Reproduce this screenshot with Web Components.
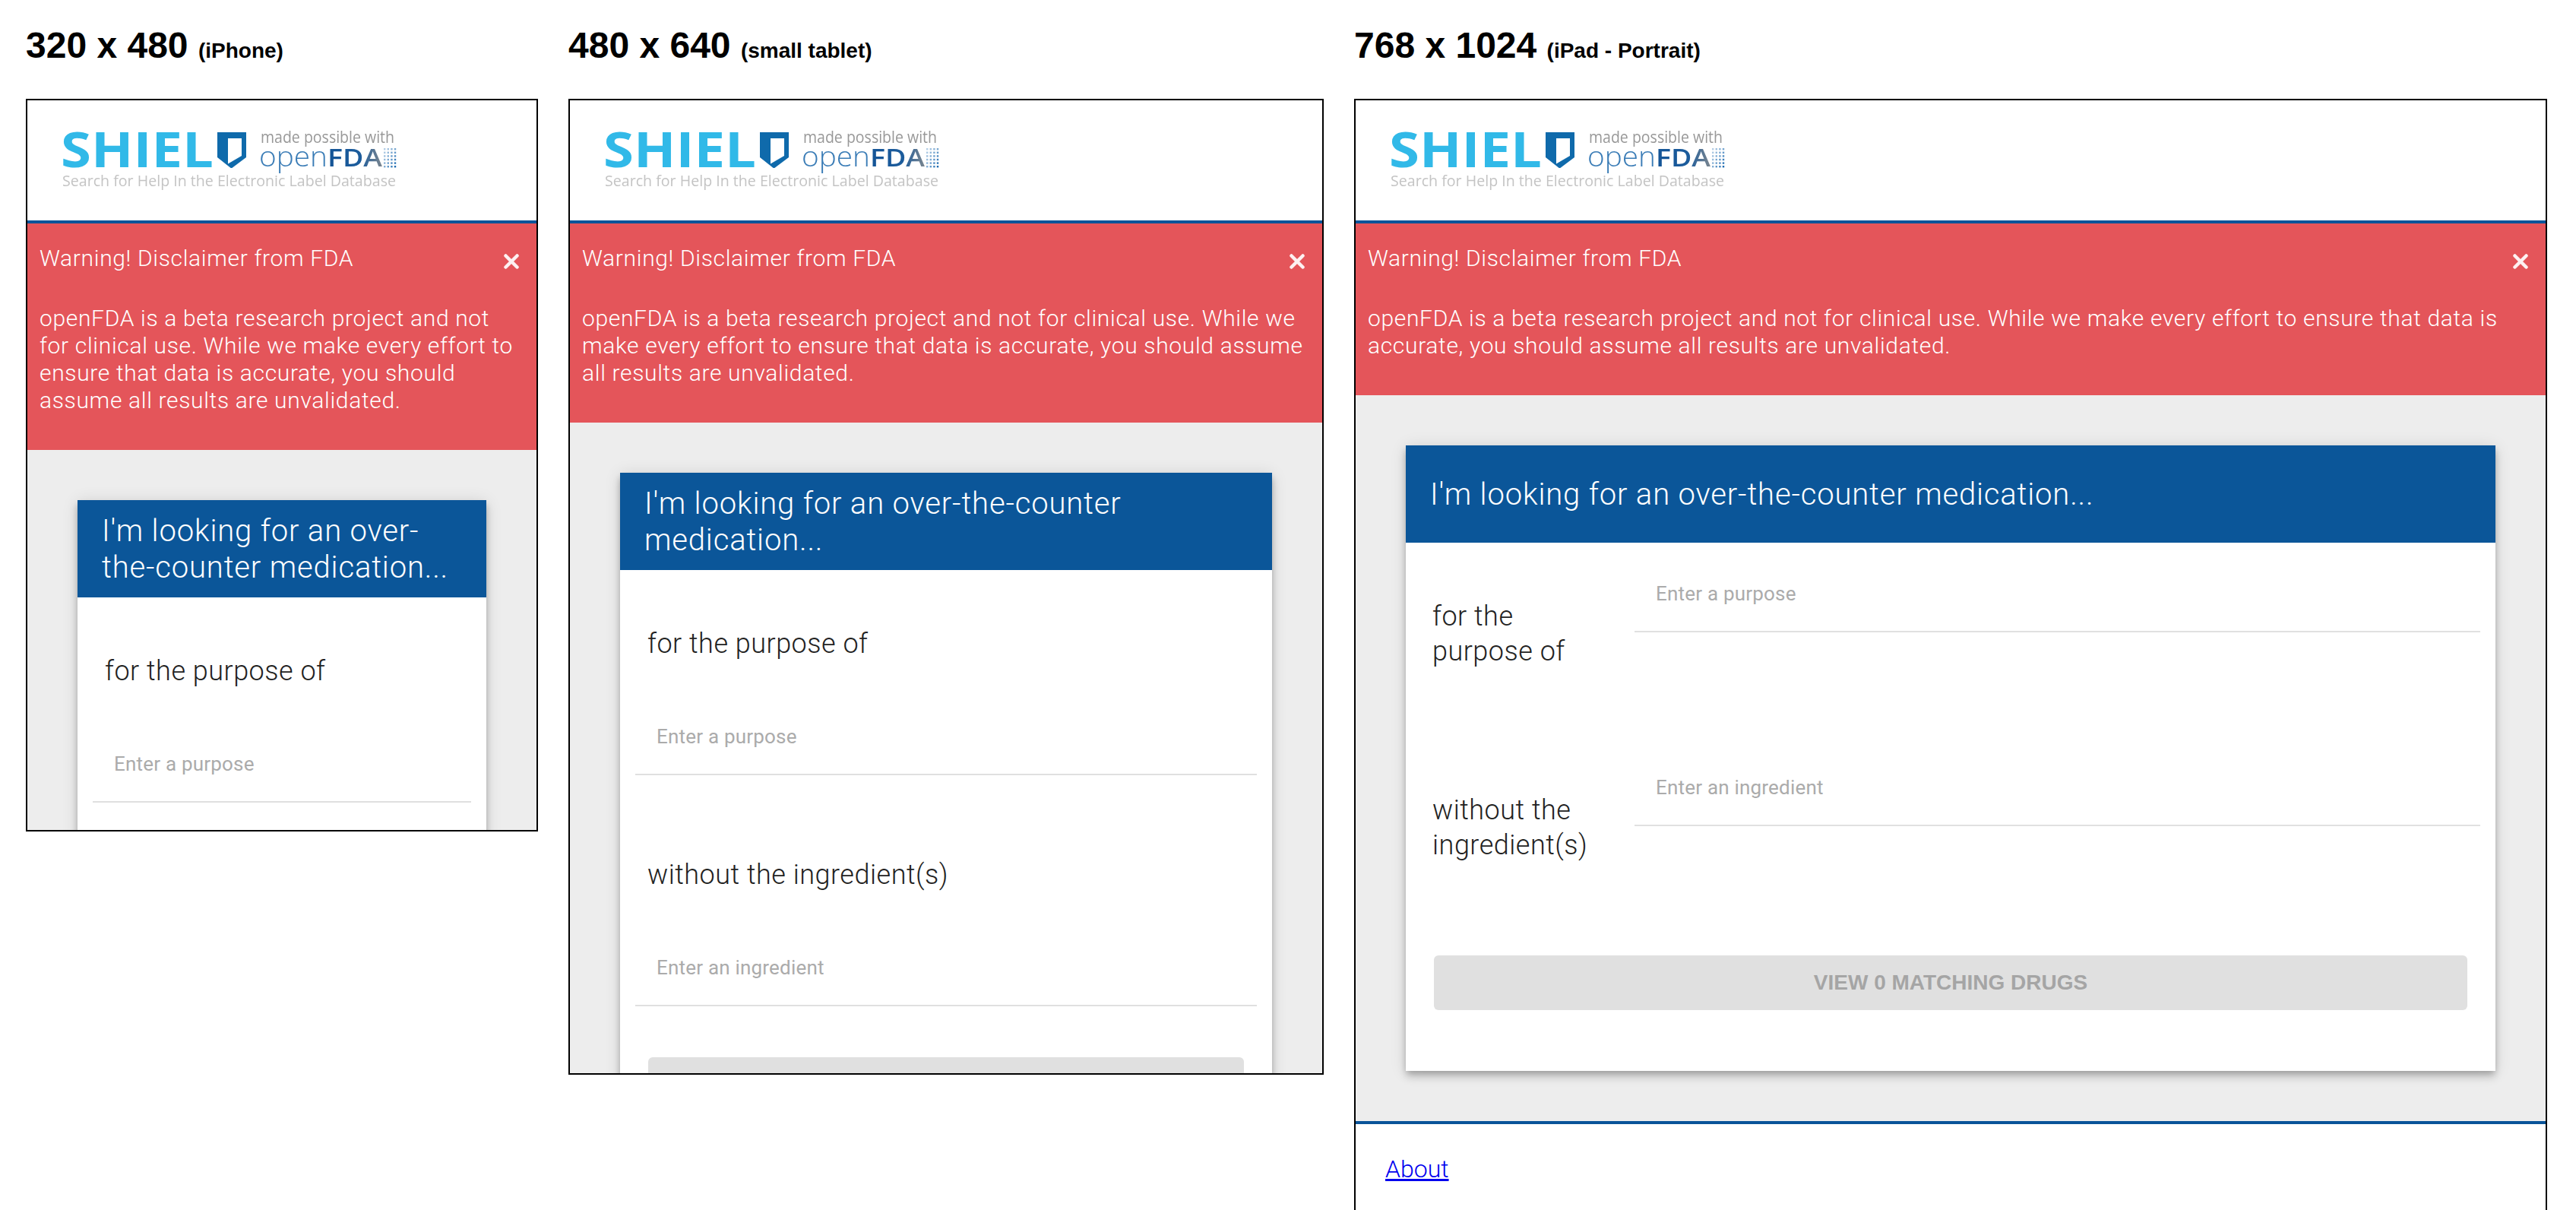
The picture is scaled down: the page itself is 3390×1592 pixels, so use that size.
<!DOCTYPE html>
<html lang="en">
<head>
<meta charset="utf-8">
<title>SHIELD responsive screens</title>
<style>
html,body{margin:0;padding:0;background:#fff;height:100%;overflow:hidden}
body{font-family:"Liberation Sans",Arial,sans-serif}
</style>
</head>
<body>
<app-gallery>
  <device-view width="674" height="964" title-main="320 x 480" title-sub="(iPhone)">
    <shield-header></shield-header>
    <fda-alert>openFDA is a beta research project and not<br>for clinical use. While we make every effort to<br>ensure that data is accurate, you should<br>assume all results are unvalidated.</fda-alert>
    <search-main gap="66">
      <search-card layout="stacked">
        <span slot="title">I'm looking for an over-<br>the-counter medication...</span>
        <search-row layout="stacked" placeholder="Enter a purpose">for the purpose of</search-row>
        <search-row layout="stacked" placeholder="Enter an ingredient">without the ingredient(s)</search-row>
      </search-card>
    </search-main>
  </device-view>
  <device-view width="994" height="1284" title-main="480 x 640" title-sub="(small tablet)">
    <shield-header></shield-header>
    <fda-alert>openFDA is a beta research project and not for clinical use. While we<br>make every effort to ensure that data is accurate, you should assume<br>all results are unvalidated.</fda-alert>
    <search-main gap="66">
      <search-card layout="stacked">
        <span slot="title">I'm looking for an over-the-counter<br>medication...</span>
        <search-row layout="stacked" placeholder="Enter a purpose">for the purpose of</search-row>
        <search-row layout="stacked" placeholder="Enter an ingredient">without the ingredient(s)</search-row>
      </search-card>
    </search-main>
  </device-view>
  <device-view width="1570" open-bottom title-main="768 x 1024" title-sub="(iPad - Portrait)">
    <shield-header></shield-header>
    <fda-alert>openFDA is a beta research project and not for clinical use. While we make every effort to ensure that data is<br>accurate, you should assume all results are unvalidated.</fda-alert>
    <search-main gap="66">
      <search-card layout="inline">
        <span slot="title">I'm looking for an over-the-counter medication...</span>
        <search-row layout="inline" placeholder="Enter a purpose">for the<br>purpose of</search-row>
        <search-row layout="inline" placeholder="Enter an ingredient">without the<br>ingredient(s)</search-row>
      </search-card>
    </search-main>
    <shield-footer></shield-footer>
  </device-view>
</app-gallery>
<script>
const LIGHT = '"Roboto","Liberation Sans",Arial,sans-serif';
function define(name, html, init){
  const t=document.createElement('template'); t.innerHTML=html;
  customElements.define(name, class extends HTMLElement{
    constructor(){super(); this.attachShadow({mode:'open'}).appendChild(t.content.cloneNode(true));}
    connectedCallback(){ if(init) init(this, this.shadowRoot); }
  });
}
define('app-gallery',`<style>
:host{display:flex;gap:40px;padding:0 0 0 34px;align-items:flex-start;height:100vh;overflow:hidden;box-sizing:border-box}
</style><slot></slot>`);

define('device-view',`<style>
:host{display:flex;flex-direction:column;flex:none}
h2{margin:0;height:130px;box-sizing:border-box;padding-top:33px;font:700 48px/54px "Liberation Sans",Arial,sans-serif;color:#000;white-space:pre}
small{font-size:28px}
.screen{box-sizing:border-box;border:2px solid #000;background:#fff;overflow:hidden;display:flex;flex-direction:column;font-family:${LIGHT};font-weight:300}
</style><h2><span id="m"></span> <small id="s"></small></h2><div class="screen" id="f"><slot></slot></div>`,
(el,r)=>{
  r.getElementById('m').textContent=el.getAttribute('title-main');
  r.getElementById('s').textContent=el.getAttribute('title-sub');
  const f=r.getElementById('f');
  el.style.width=el.getAttribute('width')+'px';
  if(el.hasAttribute('open-bottom')){f.style.borderBottom='0';f.style.height='1462px';}
  else f.style.height=el.getAttribute('height')+'px';
});

let dots='';
for(let c=0;c<4;c++)for(let r=0;r<6;r++){
  const o=(0.55+c*0.15)*(0.6+r*0.08);
  dots+=`<rect x="${427+c*4.6}" y="${30+r*4.6}" width="2.4" height="2.4" fill="#1f6cb2" opacity="${o.toFixed(2)}"/>`;
}
define('shield-header',`<style>
:host{display:block;flex:none;height:158px;box-sizing:content-box;border-bottom:4px solid #0a5499;background:#fff;padding:0}
.w{padding:18px 0 0 42px}
svg{display:block;filter:blur(.7px)}
text{font-family:"Open Sans","Liberation Sans",sans-serif}
</style><div class="w"><svg width="540" height="115" viewBox="0 -15 540 115" role="img" aria-label="SHIELD logo">
<defs><linearGradient id="g" x1="0" x2="1" y1="0" y2="0"><stop offset="0" stop-color="#145496"/><stop offset=".6" stop-color="#1c5c9c"/><stop offset="1" stop-color="#7d868e"/></linearGradient></defs>
<text x="2" y="55" font-size="64" font-weight="700" fill="#31b9e8" textLength="201" lengthAdjust="spacingAndGlyphs">SHIEL</text>
<path d="M208 9H246V42L228 55.500Q226.500 56.500 225 55.500L208 42Z" fill="#0f6aab"/>
<path d="M222 17H240V40L222 50.500Z" fill="#fff"/>
<text x="265" y="23" font-size="21" font-weight="400" fill="#989898" textLength="176" lengthAdjust="spacingAndGlyphs">made possible with</text>
<text x="263" y="54" font-size="37" font-weight="300" fill="#3a7cb6" textLength="90" lengthAdjust="spacingAndGlyphs">open</text>
<text x="353" y="54" font-size="33" font-weight="600" fill="url(#g)" textLength="72" lengthAdjust="spacingAndGlyphs">FDA</text>
${dots}
<text x="4" y="80" font-size="20" font-weight="400" fill="#c4c4c4" textLength="439" lengthAdjust="spacingAndGlyphs">Search for Help In the Electronic Label Database</text>
</svg></div>`);

define('fda-alert',`<style>
:host{display:block;flex:none;background:#e4555a;color:#fff;font-size:30px;line-height:36px;padding:28px 0 47px 16px;letter-spacing:.66px}
.t{display:flex;justify-content:space-between;align-items:center;margin-bottom:43px;padding-right:23px}
.b{white-space:nowrap}
svg{display:block;margin-top:8px}
</style><div class="t"><span>Warning! Disclaimer from FDA</span><svg width="20" height="20" viewBox="0 0 20 20" aria-label="Close"><path d="M2.500 2.500L17.500 17.500M17.500 2.500L2.500 17.500" stroke="#fff" stroke-opacity=".92" stroke-width="4.500" stroke-linecap="round" fill="none"/></svg></div><div class="b"><slot></slot></div>`);

define('search-main',`<style>
:host{display:block;flex:none;background:#ededed;padding:0 66px 66px 66px}
</style><slot></slot>`,(el)=>{el.style.paddingTop=el.getAttribute('gap')+'px';});

define('search-card',`<style>
:host{display:block;background:#fff;box-shadow:0 4px 8px -2px rgba(0,0,0,.2),0 8px 10px 0 rgba(0,0,0,.14),0 2px 20px 0 rgba(0,0,0,.12)}
header{background:#0b5699;color:#fff;height:128px;box-sizing:border-box;display:flex;align-items:center;padding:2px 32px 0;font-size:40px;line-height:48px;letter-spacing:.83px;white-space:nowrap}
.body{padding:0 20px}
.btn{margin:0 17px;height:72px;border-radius:6px;background:#e0e0e0;color:#a5a5a5;display:flex;align-items:center;justify-content:center;font:700 28px/1 "Liberation Sans",Arial,sans-serif}
:host([layout=stacked]) .body{padding-top:74px}
:host([layout=stacked]) .btn{margin-top:67px}
:host([layout=inline]) .body{padding-top:50px;padding-bottom:80px}
:host([layout=inline]) .btn{margin-top:122px}
</style><header><slot name="title"></slot></header><div class="body"><slot></slot><div class="btn">VIEW 0 MATCHING DRUGS</div></div>`);

define('search-row',`<style>
:host{display:block;color:#222}
.l{font-size:36px;line-height:46px;letter-spacing:.5px;padding-left:16px;white-space:nowrap}
.i{border-bottom:2px solid #e0e0e0;padding:0 0 32px 28px;font-size:26px;line-height:34px;font-weight:400;color:#ababab;letter-spacing:.2px;white-space:nowrap}
:host([layout=stacked]) .l{margin-bottom:82px}
:host([layout=inline]){display:grid;grid-template-columns:281px 1fr;align-items:start}
:host([layout=inline]) .l{margin-top:24px;padding-left:15px}
</style><div class="l"><slot></slot></div><div class="i" id="p"></div>`,
(el,r)=>{
  r.getElementById('p').textContent=el.getAttribute('placeholder');
  const prev=el.previousElementSibling;
  if(prev && prev.tagName==='SEARCH-ROW') el.style.marginTop=el.getAttribute('layout')==='stacked'?'108px':'139px';
});

define('shield-footer',`<style>
:host{display:block;flex:1;background:#fff;border-top:4px solid #0a5499;padding:41px 0 0 39px;font-size:32px;line-height:36px}
a{color:#0000ee;text-decoration:underline}
</style><a href="#">About</a>`);
</script>
</body>
</html>
